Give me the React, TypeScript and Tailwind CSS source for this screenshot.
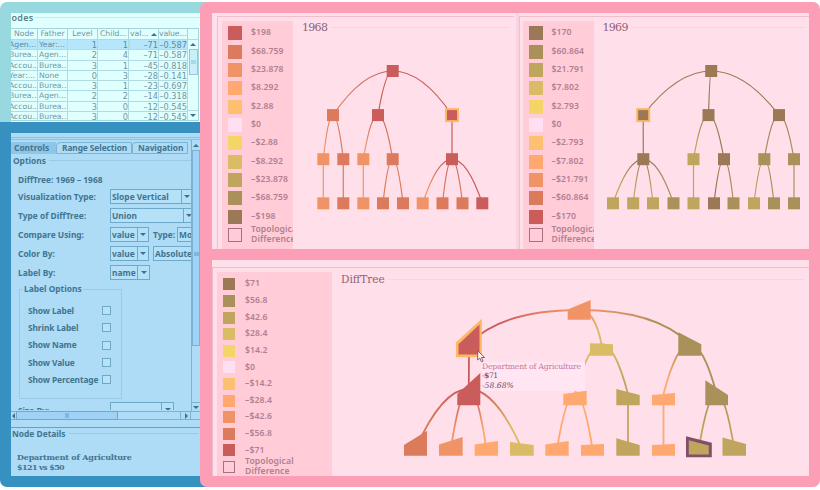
import React from "react";

const SANS = "font-['Noto_Sans','Open_Sans',sans-serif]";
const SERIF = "font-['DejaVu_Serif','Liberation_Serif',serif]";

const C = {
  red: "#cb5c5c",
  rust: "#dc7a5c",
  orange: "#f09468",
  peach: "#ffa970",
  amber: "#fdc070",
  zero: "#fee0f2",
  yellow: "#f3d568",
  sand: "#dabb66",
  khaki: "#c0a55e",
  olive: "#aa915a",
  brown: "#9b7956",
};

const warmFirst = [C.red, C.rust, C.orange, C.peach, C.amber, C.zero, C.yellow, C.sand, C.khaki, C.olive, C.brown];
const coolFirst = [...warmFirst].reverse();

const rows = [
  ["Agen...", "Year:...", "1", "1", "–71", "–0.587"],
  ["Burea...", "Agen...", "2", "4", "–71", "–0.587"],
  ["Accou...", "Burea...", "3", "1", "–45", "–0.818"],
  ["Year:...", "None", "0", "3", "–28", "–0.141"],
  ["Accou...", "Burea...", "3", "1", "–23", "–0.697"],
  ["Burea...", "Agen...", "2", "2", "–14", "–0.318"],
  ["Accou...", "Burea...", "3", "0", "–12", "–0.545"],
  ["Accou...", "Burea...", "3", "0", "–12", "–0.545"],
];

function Arrow({ dir }: { dir: "up" | "down" | "left" | "right" }) {
  const d = { up: "M0 4L3 1L6 4Z", down: "M0 1L3 4L6 1Z", left: "M4 0L1 3L4 6Z", right: "M1 0L4 3L1 6Z" }[dir];
  const wide = dir === "up" || dir === "down";
  return (
    <svg width={wide ? 6 : 5} height={wide ? 5 : 6} className="shrink-0">
      <path d={d} fill="#3b7191" />
    </svg>
  );
}

function NodesTable() {
  return (
    <section className={"h-[120px] rounded-tl-[7px] bg-[#98d8df] pt-[11px] pl-[11px] " + SANS}>
      <div className="flex h-full flex-col overflow-hidden bg-[#e0ffff] text-[#71969e]">
        <div className="flex h-[15px] items-start">
          <span className="-ml-[7px] h-[10px] w-[31px] text-[9px] leading-[9px] font-semibold tracking-[0.3px] text-[#5b7f88]">Nodes</span>
          <span className="mt-[4px] h-px flex-1 bg-[#c5eaf0]" />
        </div>
        <div className="flex h-[93px] w-[188px] border-y border-[#a4d5dd] font-['DejaVu_Sans',sans-serif]">
          <div className="w-[177px] overflow-hidden">
            <div className="grid h-[10px] grid-cols-[27px_30px_30px_31px_30px_29px] text-center text-[7.7px] leading-[10px] whitespace-nowrap">
              <span className="border-r border-[#a4d5dd]">Node</span>
              <span className="border-r border-[#a4d5dd]">Father</span>
              <span className="border-r border-[#a4d5dd]">Level</span>
              <span className="overflow-hidden border-r border-[#a4d5dd] pl-[2px] text-left">Child...</span>
              <span className="flex items-center justify-between overflow-hidden border-r border-[#a4d5dd] px-px">
                val... <Arrow dir="up" />
              </span>
              <span className="overflow-hidden border-r border-[#a4d5dd] text-left tracking-[-0.1px]">value...</span>
            </div>
            {rows.map((r, i) => (
              <div
                key={i}
                className={
                  "grid h-[10.3px] grid-cols-[27px_30px_30px_31px_30px_29px] border-t border-[#b0dbe3] text-[8.2px] leading-[10px] whitespace-nowrap " +
                  (i === 0 ? "bg-[#b5e6fb] text-[#5b8ca3]" : "")
                }
              >
                {r.map((c, j) => (
                  <span
                    key={j}
                    className={
                      "overflow-hidden border-r border-[#b0dbe3] " +
                      (j > 1 ? "text-right " : j === 0 ? "-ml-[2px] text-[7.7px] " : "pl-px text-[7.7px] ") +
                      (i === 0 && j === 4 ? "border-l border-[#7fb0cc]" : "")
                    }
                  >
                    {c}
                  </span>
                ))}
              </div>
            ))}
          </div>
          <div className="flex w-[11px] flex-col items-center border-r border-[#a4d5dd]">
            <div className="mt-[10px] flex h-[10px] w-full items-center justify-center border-t border-[#b0dbe3]"><Arrow dir="up" /></div>
            <div className="flex h-[26px] w-[9px] items-center justify-center border border-[#94c8dd] bg-[#c9effa]">
              <span className="h-[4px] w-[5px] bg-[#a9d8e9]" />
            </div>
            <div className="mt-auto flex h-[10px] w-full items-center justify-center border-t border-[#b0dbe3]"><Arrow dir="down" /></div>
          </div>
        </div>
      </div>
    </section>
  );
}

function Combo({ text, box, arrow }: { text: string; box: string; arrow: string }) {
  return (
    <span className={"flex h-[15px] shrink-0 border border-[#6fa9ca] bg-[#b4e0f8] " + box}>
      <span className="flex-1 overflow-hidden pl-[1px] leading-[13px]">{text}</span>
      {arrow && (
        <span className={"flex shrink-0 items-center justify-center border-l border-[#6fa9ca] " + arrow}>
          <Arrow dir="down" />
        </span>
      )}
    </span>
  );
}

function Field({ label, children }: { label: string; children?: React.ReactNode }) {
  return (
    <div className="flex h-[19px] items-center pl-[7px]">
      <span className="w-[92px] shrink-0">{label}</span>
      {children}
    </div>
  );
}

function ControlsPanel() {
  return (
    <section className={"h-[365px] rounded-bl-[7px] bg-[#3690c0] pt-[11px] pb-[11px] pl-[11px] " + SANS}>
      <div className="flex h-full flex-col overflow-hidden bg-[#aedbf5] text-[8.4px] leading-[10px] font-bold whitespace-nowrap text-[#417590]">
        <div className="h-[5px] border-b border-[#8fc0dc]" />
        <div className="h-px" />
        <div className="flex h-[272px] border-t border-[#8fc0dc]">
          <div className="w-[180px] overflow-hidden">
            <div className="mt-[2px] flex h-[12px]">
              <span className="w-[45px] bg-[#8fc5e6] pt-px pl-[3px]">Controls</span>
              <span className="w-[76px] rounded-tl-[4px] border border-[#7db3d2] pl-[5px] tracking-[-0.1px]">Range Selection</span>
              <span className="w-[56px] rounded-tl-[4px] border border-[#7db3d2] pl-[5px] tracking-[-0.1px]">Navigation</span>
            </div>
            <div className="mt-px flex h-[11px] items-center gap-[3px] pl-[2px]">
              Options <span className="h-px flex-1 bg-[#98cbe6]" />
            </div>
            <div className="mt-[4px]">
              <Field label="DiffTree: 1969 – 1968" />
              <div className="-mt-[2px]">
                <Field label="Visualization Type:"><Combo text="Slope Vertical" box="w-[82px]" arrow="w-[10px]" /></Field>
                <Field label="Type of DiffTree:"><Combo text="Union" box="w-[84px]" arrow="w-[10px]" /></Field>
                <Field label="Compare Using:">
                  <Combo text="value" box="w-[39px]" arrow="w-[11px]" />
                  <span className="mr-[3px] ml-[4px] w-[21px]">Type:</span>
                  <Combo text="Mo" box="w-[30px]" arrow="" />
                </Field>
                <Field label="Color By:">
                  <Combo text="value" box="mr-[4px] w-[39px]" arrow="w-[11px]" />
                  <Combo text="Absolute" box="w-[55px]" arrow="" />
                </Field>
                <Field label="Label By:"><Combo text="name" box="w-[40px]" arrow="w-[12px]" /></Field>
              </div>
            </div>
            <fieldset className="mt-[2px] ml-[8px] h-[115px] w-[103px] border border-[#98cbe6] pl-[8px]">
              <legend className="-ml-[5px] px-px">Label Options</legend>
              <div className="mt-[8px]">
                {["Show Label", "Shrink Label", "Show Name", "Show Value", "Show Percentage"].map((t) => (
                  <div key={t} className="flex h-[17.3px] items-center">
                    <span className="w-[74px] tracking-[-0.1px]">{t}</span>
                    <span className="h-[9px] w-[9px] border border-[#6fa9ca] bg-[#b9e2f8]" />
                  </div>
                ))}
              </div>
            </fieldset>
            <div className="mt-[3px] flex h-[8px] items-start overflow-hidden pl-[7px]">
              <span className="mt-[4px] w-[92px]">Size By:</span>
              <Combo text="" box="w-[64px]" arrow="w-[12px]" />
            </div>
          </div>
          <div className="flex w-[9px] flex-col items-center border-l border-[#7db3d2]">
            <span className="flex h-[10px] items-center"><Arrow dir="up" /></span>
            <span className="flex h-[196px] w-full items-center justify-center border border-[#7db3d2] bg-[#9fd2f4]">
              <span className="mt-[12px] h-[4px] w-[5px] bg-[#7fb8dc]" />
            </span>
            <span className="mt-auto flex h-[9px] w-full items-center justify-center border-t border-[#7db3d2]"><Arrow dir="down" /></span>
          </div>
        </div>
        <div className="flex h-[9px] items-center border-y border-[#7db3d2]">
          <span className="w-[5px] overflow-hidden"><Arrow dir="left" /></span>
          <span className="flex h-[9px] w-[102px] items-center justify-center border border-[#6fa9ca] bg-[#9fd2f4]">
            <span className="h-[5px] w-[4px] bg-[#7fb8dc]" />
          </span>
          <span className="ml-auto flex h-full w-[20px] items-center border-l border-[#7db3d2]">
            <span className="flex h-full w-[10px] items-center border-r border-[#7db3d2] pl-[3px]"><Arrow dir="right" /></span>
          </span>
        </div>
        <div className="h-[8px] border-b border-[#6f9fba]" />
        <div className="flex h-[11px] items-center gap-[3px] pl-px">
          Node Details <span className="mr-[2px] h-px flex-1 bg-[#98cbe6]" />
        </div>
        <div className={"mt-[14px] pl-[6px] text-[8px] leading-[9.5px] font-bold " + SERIF}>
          <div className="tracking-[-0.2px]">Department of Agriculture</div>
          <div className="tracking-[-0.6px]">$121 vs $50</div>
        </div>
      </div>
    </section>
  );
}

type LegendProps = { colors: string[]; labels: string[]; box: string; row: string; swatch: string; gap: string };

function Legend({ colors, labels, box, row, swatch, gap }: LegendProps) {
  return (
    <div className={"shrink-0 overflow-hidden bg-[#ffccd8] text-[8.6px] leading-[9.7px] font-semibold tracking-[0.1px] whitespace-nowrap text-[#b07f90] " + box + " " + SANS}>
      {labels.map((l, i) => (
        <div key={l} className={"flex items-center " + row + " " + gap}>
          <span className={swatch} style={{ backgroundColor: colors[i] }} />
          {l}
        </div>
      ))}
      <div className={"flex items-center " + row + " " + gap}>
        <span className={"border border-[#a86f82] " + swatch} />
        <span>Topological<br />Difference</span>
      </div>
    </div>
  );
}

type Pt = { x: number; y: number; c: string };

function Edge({ a, b, k = 0.5, w = 1.2 }: { a: Pt; b: Pt; k?: number; w?: number }) {
  const id = `e${Math.round(a.x * 10)}-${Math.round(a.y)}-${Math.round(b.x * 10)}-${Math.round(b.y)}`;
  return (
    <g>
      <linearGradient id={id} gradientUnits="userSpaceOnUse" x1={a.x} y1={a.y} x2={b.x} y2={b.y}>
        <stop offset="0.1" stopColor={a.c} />
        <stop offset="0.7" stopColor={b.c} />
      </linearGradient>
      <path d={`M${a.x} ${a.y}Q${b.x + (a.x - b.x) * k} ${a.y} ${b.x} ${b.y}`} fill="none" stroke={`url(#${id})`} strokeWidth={w} />
    </g>
  );
}

type Spec = [x: number, level: number, color: string, parent: number, selected?: boolean];

function SquareTree({ specs, viewBox, width, height }: { specs: Spec[]; viewBox: string; width: number; height: number }) {
  const pts = specs.map(([x, l, c]) => ({ x, y: 71 + l * 44.1, c }));
  return (
    <svg viewBox={viewBox} width={width} height={height} className="block">
      {specs.map((s, i) => s[3] >= 0 && <Edge key={i} a={pts[s[3]]} b={pts[i]} />)}
      {specs.map((s, i) => (
        <g key={i}>
          {s[4] && <rect x={s[0] - 7} y={pts[i].y - 7} width={14} height={14} fill="#fdb865" />}
          <rect x={s[0] - (s[4] ? 5 : 6)} y={pts[i].y - (s[4] ? 5 : 6)} width={s[4] ? 10 : 12} height={s[4] ? 10 : 12} fill={s[2]} />
        </g>
      ))}
    </svg>
  );
}

const tree68: Spec[] = [
  [392.7, 0, C.red, -1],
  [333, 1, C.rust, 0],
  [378, 1, C.red, 0],
  [452, 1, C.red, 0, true],
  [323.3, 2, C.orange, 1],
  [343.3, 2, C.rust, 1],
  [363.3, 2, C.orange, 2],
  [392.7, 2, C.rust, 2],
  [452, 2, C.red, 3],
  [323.3, 3, C.orange, 4],
  [343.3, 3, C.rust, 5],
  [363.3, 3, C.orange, 6],
  [383, 3, C.rust, 7],
  [403, 3, C.rust, 7],
  [422.7, 3, C.orange, 8],
  [442.5, 3, C.rust, 8],
  [462.5, 3, C.rust, 8],
  [482.3, 3, C.red, 8],
];

const tree69: Spec[] = [
  [711.2, 0, C.brown, -1],
  [643.2, 1, C.brown, 0, true],
  [708.5, 1, C.brown, 0],
  [779, 1, C.brown, 0],
  [643.3, 2, C.brown, 1],
  [693.5, 2, C.khaki, 2],
  [724, 2, C.brown, 2],
  [764.3, 2, C.olive, 3],
  [794, 2, C.olive, 3],
  [613, 3, C.khaki, 4],
  [633.2, 3, C.khaki, 4],
  [653, 3, C.khaki, 4],
  [673.5, 3, C.olive, 4],
  [693.5, 3, C.khaki, 5],
  [714, 3, C.brown, 6],
  [733.5, 3, C.olive, 6],
  [754, 3, C.khaki, 7],
  [774, 3, C.olive, 7],
  [794, 3, C.olive, 8],
];

// Slope glyphs: left x, right x, top-left y, top-right y, baseline y, colour, parent index
type Slope = [number, number, number, number, number, string, number];
const slopes: Slope[] = [
  [567.7, 590.7, 310.5, 301, 320.7, C.orange, -1],
  [458.5, 479.5, 345.2, 325.5, 355.6, C.red, 0],
  [590, 613, 344.3, 345.3, 356.7, C.sand, 0],
  [678.3, 701.3, 333.3, 345.3, 356.7, C.olive, 0],
  [457.3, 480.3, 395, 374, 406.3, C.red, 1],
  [563.3, 586.7, 395, 391.7, 406.3, C.peach, 2],
  [616.3, 639.7, 390, 396, 406.3, C.khaki, 2],
  [652, 675, 396, 394, 406.3, C.peach, 3],
  [705.3, 728, 381.3, 396, 406.3, C.olive, 3],
  [404, 427, 446, 431.7, 456.7, C.rust, 4],
  [439, 462.7, 445.5, 438, 456.7, C.orange, 4],
  [474.7, 498, 445.5, 442, 456.7, C.peach, 4],
  [510, 533.7, 443, 446, 456.7, C.sand, 4],
  [545.3, 568.7, 445.5, 442, 456.7, C.peach, 5],
  [581, 604, 446, 445, 456.7, C.peach, 5],
  [616.3, 639.7, 439.3, 446, 456.7, C.khaki, 6],
  [652, 675, 446, 445, 456.7, C.peach, 7],
  [688.8, 708.8, 441.3, 446.5, 455.5, C.khaki, 8],
  [722.5, 746, 438.5, 445, 456.7, C.khaki, 8],
];

function SlopeTree() {
  const levelY = (base: number) => (base < 330 ? 311 : base < 370 ? 345 : base < 420 ? 395 : 450);
  const pts = slopes.map((s) => ({ x: (s[0] + s[1]) / 2, y: levelY(s[4]), c: s[5] }));
  return (
    <svg viewBox="337 288 472 188" width={472} height={188} className="block">
      {slopes.map((s, i) => s[6] >= 0 && <Edge key={i} a={{ ...pts[s[6]], y: pts[s[6]].y - (s[6] === 4 ? 5 : 0) }} b={pts[i]} w={1.8} k={s[6] === 0 ? 0.3 : 0.5} />)}
      <path d="M456 343.2L481.8 319.8V358.2H456Z" fill="#fdb865" />
      <path d="M686 437.3L711.8 443.8V458.2H686Z" fill="#80506a" />
      {slopes.map(([l, r, tl, tr, b, c], i) => (
        <path key={i} d={`M${l} ${tl}L${r} ${tr}V${b}H${l}Z`} fill={c} />
      ))}
    </svg>
  );
}

function TitleBar({ title, box }: { title: string; box: string }) {
  return (
    <div className={"flex items-center gap-[3px] text-[#8f6275] " + box + " " + SERIF}>
      {title} <span className="mr-[4px] h-px flex-1 bg-[#fbd2df]" />
    </div>
  );
}

function YearPanel(p: { title: string; labels: string[]; colors: string[]; specs: Spec[]; viewBox: string; width: number; shell: string }) {
  return (
    <div className={"flex overflow-hidden " + p.shell}>
      <Legend
        colors={p.colors}
        labels={p.labels}
        box="mt-[4px] w-[71px] pt-[3px]"
        row="h-[18.35px]"
        swatch="h-[14px] w-[14px] shrink-0"
        gap="gap-[9px] pl-[6px]"
      />
      <div className="ml-[5px] flex flex-col">
        <TitleBar title={p.title} box="mt-[4px] h-[13px] pl-[4px] text-[11px] leading-[13px] tracking-[-0.7px]" />
        <SquareTree specs={p.specs} viewBox={p.viewBox} width={p.width} height={215} />
      </div>
    </div>
  );
}

export default function App() {
  return (
    <main className="flex h-[490px] w-[820px] overflow-hidden bg-white pt-[2px]">
      <div className="h-[485px] w-[200px] shrink-0">
        <NodesTable />
        <ControlsPanel />
      </div>
      <div className="h-[485px] bg-[linear-gradient(#98d8df_25%,#3690c0_25%)] bg-[length:10px_100%] bg-no-repeat">
        <div className="flex h-full w-[620px] flex-col rounded-[7px] bg-[#fc9fb6] py-[11px] pr-[11px] pl-[12px]">
          <div className="flex h-[236px] overflow-hidden bg-[#ffdfe9]">
            <YearPanel
              title="1968"
              labels={["$198", "$68.759", "$23.878", "$8.292", "$2.88", "$0", "–$2.88", "–$8.292", "–$23.878", "–$68.759", "–$198"]}
              colors={warmFirst}
              specs={tree68}
              viewBox="298 34 215 215"
              width={215}
              shell="mt-[3px] ml-[5px] w-[297px] border-t border-l border-[#f3bdce] pl-[4px]"
            />
            <div className="ml-[2px] w-[3px] bg-[#fbd3e0]" />
            <YearPanel
              title="1969"
              labels={["$170", "$60.864", "$21.791", "$7.802", "$2.793", "$0", "–$2.793", "–$7.802", "–$21.791", "–$60.864", "–$170"]}
              colors={coolFirst}
              specs={tree69}
              viewBox="599 34 210 215"
              width={210}
              shell="mt-[3px] w-[291px] border-t border-l border-[#f3bdce] pl-[3px]"
            />
          </div>
          <div className="relative mt-[11px] h-[216px] overflow-hidden bg-[#ffdfe9] pt-[7px]">
            <div className="flex h-full border-t border-l border-[#f0bbcb] pl-[4px]">
              <Legend
                colors={coolFirst}
                labels={["$71", "$56.8", "$42.6", "$28.4", "$14.2", "$0", "–$14.2", "–$28.4", "–$42.6", "–$56.8", "–$71"]}
                box="mt-[4px] w-[115px] pt-[4px]"
                row="h-[16.62px]"
                swatch="h-[12px] w-[12px] shrink-0"
                gap="gap-[10px] pl-[6px]"
              />
              <div className="ml-[5px] flex flex-col">
                <TitleBar title="DiffTree" box="mt-[3px] h-[16px] pl-[4px] text-[10.5px] leading-[13px]" />
                <SlopeTree />
              </div>
            </div>
            <div className={"absolute top-[102px] left-[269px] h-[29px] w-[104px] bg-[#ffe6f2] pl-px text-[7.7px] leading-[9.3px] whitespace-nowrap text-[#c77897] " + SERIF}>
              <div className="tracking-[-0.2px]">Department of Agriculture</div>
              <div className="tracking-[-0.5px] text-[#7d4a62]">-<b>$</b>71</div>
              <div className="text-[#7d4a62] italic">-58.68%</div>
            </div>
            <svg width="9" height="13" viewBox="0 0 9 13" className="absolute top-[90px] left-[265px]">
              <path d="M.7 .8V10L2.9 8.1L4.4 11.8L6 11.1L4.5 7.5H7.7Z" fill="#fff3f6" stroke="#80505f" strokeWidth=".9" />
            </svg>
          </div>
        </div>
      </div>
    </main>
  );
}
